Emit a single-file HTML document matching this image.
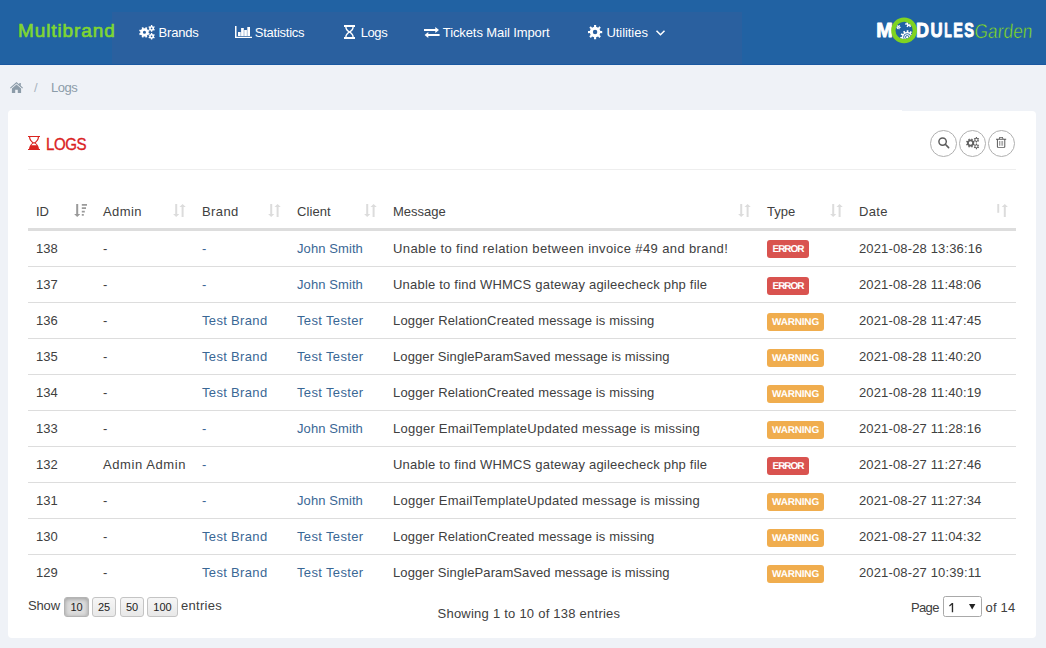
<!DOCTYPE html>
<html>
<head>
<meta charset="utf-8">
<title>Multibrand - Logs</title>
<style>
*{box-sizing:border-box}
html,body{margin:0;padding:0}
body{width:1046px;height:648px;overflow:hidden;background:#eff2f7;font-family:"Liberation Sans",sans-serif;font-size:13px;color:#404040;position:relative}
.abs{position:absolute;white-space:nowrap}
.ic{position:absolute;display:block;overflow:visible}
#nav{position:absolute;left:0;top:0;width:1046px;height:65px;background:#2162a3;border-bottom:1px solid #1a58a0}
#navin{position:absolute;left:112px;top:12px;width:630px;height:52px;background:#2a609f}
#brand{left:18px;top:20px;font-size:19px;font-weight:normal;color:#80d631;line-height:22px;letter-spacing:0.900px;-webkit-text-stroke:0.650px #80d631}
.ni{color:#fff;font-size:13px;line-height:16px;top:25px}
.bc{color:#8c9ca9;font-size:13px;line-height:16px;top:80px}
#panel{position:absolute;left:8px;top:110px;width:1028px;height:528px;background:#fff;border-radius:4px}
#panel2{position:absolute;left:902px;top:110px;width:134px;height:8px;background:#eff2f7}
#panel3{position:absolute;left:896px;top:111px;width:140px;height:12px;background:#fff;border-radius:0 4px 0 0}
#title{left:46.300px;top:134px;font-size:16.5px;line-height:20px;color:#da231f;letter-spacing:-0.500px;-webkit-text-stroke:0.350px #da231f;transform:scaleX(0.915);transform-origin:0 0}
#hr{position:absolute;left:28px;top:169px;width:988px;height:1px;background:#eee}
.cb{position:absolute;top:130px;width:27px;height:27px;border:1px solid #b0b0b0;border-radius:50%;background:#fff}
.th{top:204px;line-height:16px;color:#404040}
#thb{position:absolute;left:28px;top:228px;width:988px;height:3px;background:#ddd}
.row{position:absolute;left:28px;width:988px;height:36px;border-bottom:1px solid #ddd}
.row.last{border-bottom:none}
.c{position:absolute;top:10px;line-height:16px;white-space:nowrap;color:#404040}
.c.a{color:#3a6795}
.lbl{position:absolute;left:739px;top:10px;color:#fff;font-size:10px;font-weight:bold;line-height:19.5px;height:18px;border-radius:3px;text-align:center;white-space:nowrap}
.lbl i{display:block;font-style:normal;text-rendering:geometricPrecision}
.err{background:#d9534f;width:42px;letter-spacing:-1.050px}
.warn{background:#f0ad4e;width:57px;letter-spacing:-0.200px}
.btn{position:absolute;top:597px;height:20px;border:1px solid #c4c4c4;border-radius:3px;background:linear-gradient(#f6f6f6,#e8e8e8);font-size:11px;line-height:19px;text-align:center;color:#222}
.btn.on{border-color:#b4b4b4;background:#dcdcdc;box-shadow:inset 0 1px 4px rgba(0,0,0,0.300)}
.ft{top:598px;line-height:16px}
#sel{position:absolute;left:943px;top:596px;width:39px;height:21px;border:1px solid #a9a9a9;border-radius:2.500px;background:#fff}
</style>
</head>
<body>
<div id="nav"><div id="navin"></div></div>
<div id="brand" class="abs">Multibrand</div>
<svg class="ic" style="left:139px;top:24.6px" width="16.00" height="14.60" viewBox="0 0 16 14.6"><path fill="#fff" fill-rule="evenodd" d="M9.62 8.10 L10.81 8.55 L10.12 10.20 L8.97 9.69 L7.84 10.82 L8.35 11.97 L6.70 12.66 L6.25 11.47 L4.65 11.47 L4.20 12.66 L2.55 11.97 L3.06 10.82 L1.93 9.69 L0.78 10.20 L0.09 8.55 L1.28 8.10 L1.28 6.50 L0.09 6.05 L0.78 4.40 L1.93 4.91 L3.06 3.78 L2.55 2.63 L4.20 1.94 L4.65 3.13 L6.25 3.13 L6.70 1.94 L8.35 2.63 L7.84 3.78 L8.97 4.91 L10.12 4.40 L10.81 6.05 L9.62 6.50Z M3.90 7.30 a1.55 1.55 0 1 0 3.10 0 a1.55 1.55 0 1 0 -3.10 0Z M15.01 4.05 L15.83 4.45 L15.13 5.68 L14.37 5.17 L13.25 5.81 L13.31 6.73 L11.89 6.73 L11.95 5.81 L10.83 5.17 L10.07 5.68 L9.37 4.45 L10.19 4.05 L10.19 2.75 L9.37 2.35 L10.07 1.12 L10.83 1.63 L11.95 0.99 L11.89 0.07 L13.31 0.07 L13.25 0.99 L14.37 1.63 L15.13 1.12 L15.83 2.35 L15.01 2.75Z M11.75 3.40 a0.85 0.85 0 1 0 1.70 0 a0.85 0.85 0 1 0 -1.70 0Z M15.01 11.95 L15.83 12.35 L15.13 13.58 L14.37 13.07 L13.25 13.71 L13.31 14.63 L11.89 14.63 L11.95 13.71 L10.83 13.07 L10.07 13.58 L9.37 12.35 L10.19 11.95 L10.19 10.65 L9.37 10.25 L10.07 9.02 L10.83 9.53 L11.95 8.89 L11.89 7.97 L13.31 7.97 L13.25 8.89 L14.37 9.53 L15.13 9.02 L15.83 10.25 L15.01 10.65Z M11.75 11.30 a0.85 0.85 0 1 0 1.70 0 a0.85 0.85 0 1 0 -1.70 0Z"/></svg>
<div class="abs ni" style="left:158.600px;letter-spacing:-0.2px">Brands</div>
<svg class="ic" style="left:235px;top:26px" width="17" height="12" viewBox="0 0 17 12"><path fill="#fff" d="M0 0h1.5v10.700h15.500v1.300h-17zM3 6h2.700v4h-2.700zM6.100 2h2.700v8h-2.700zM9.200 4h2.700v6h-2.700zM12.300 1h2.700v9h-2.700z"/></svg>
<div class="abs ni" style="left:254.800px;letter-spacing:-0.25px">Statistics</div>
<svg class="ic" style="left:344px;top:25px" width="11" height="14" viewBox="0 0 11 14"><path fill="#fff" fill-rule="evenodd" d="M0 0h11v1.900h-11zM0 12.100h11v1.900h-11zM1.200 1.900C1.200 4.500 3 6 4.300 7C3 8 1.200 9.500 1.200 12.100L9.800 12.100C9.800 9.500 8 8 6.700 7C8 6 9.800 4.500 9.800 1.900ZM2.600 1.900C2.600 4 4.300 5.300 5.500 6.200C6.700 5.300 8.400 4 8.400 1.900ZM2.600 12.100C2.600 10 4.300 8.700 5.500 7.800C6.700 8.700 8.400 10 8.400 12.100Z"/></svg>
<div class="abs ni" style="left:360.800px;letter-spacing:-0.45px">Logs</div>
<svg class="ic" style="left:424.300px;top:27px" width="15.600" height="11" viewBox="0 0 15.600 11"><path fill="#fff" d="M0 2.050h11.300v-2.050l3.700 2.950l-3.700 2.950v-1.900h-11.300zM15.600 7.050v1.950h-11.300v2l-3.700-2.950l3.700-2.950v1.950z"/></svg>
<div class="abs ni" style="left:442.800px;letter-spacing:-0.1px">Tickets Mail Import</div>
<svg class="ic" style="left:587.75px;top:24.95px" width="14.2" height="14.2" viewBox="0 0 14 14"><path fill="#fff" fill-rule="evenodd" d="M12.21 6.01 L14.02 5.93 L14.02 8.07 L12.21 7.99 L11.38 9.98 L12.72 11.21 L11.21 12.72 L9.98 11.38 L7.99 12.21 L8.07 14.02 L5.93 14.02 L6.01 12.21 L4.02 11.38 L2.79 12.72 L1.28 11.21 L2.62 9.98 L1.79 7.99 L-0.02 8.07 L-0.02 5.93 L1.79 6.01 L2.62 4.02 L1.28 2.79 L2.79 1.28 L4.02 2.62 L6.01 1.79 L5.93 -0.02 L8.07 -0.02 L7.99 1.79 L9.98 2.62 L11.21 1.28 L12.72 2.79 L11.38 4.02Z M4.80 7.00 a2.20 2.20 0 1 0 4.40 0 a2.20 2.20 0 1 0 -4.40 0Z"/></svg>
<div class="abs ni" style="left:606.400px;letter-spacing:-0.05px">Utilities</div>
<svg class="ic" style="left:656px;top:29.500px" width="9" height="6" viewBox="0 0 9 6"><path fill="none" stroke="#fff" stroke-width="1.500" d="M0.500 0.700l4 4.100l4-4.100"/></svg>
<svg class="ic" style="left:0;top:0" width="1046" height="65" viewBox="0 0 1046 65"><defs><clipPath id="lc"><circle cx="904.1" cy="30.4" r="9"/></clipPath></defs><g font-family="Liberation Sans, sans-serif" font-size="20.3" font-weight="bold" fill="#fff" stroke="#fff" stroke-width="0.9" stroke-linejoin="round"><text transform="translate(876.16,37.4) scale(0.978,1)">M</text><text transform="translate(915.98,37.4) scale(0.889,1)">D</text><text transform="translate(930.54,37.4) scale(0.829,1)">U</text><text transform="translate(944.14,37.4) scale(0.612,1)">L</text><text transform="translate(953.31,37.4) scale(0.715,1)">E</text><text transform="translate(964.21,37.4) scale(0.722,1)">S</text></g><g clip-path="url(#lc)"><path fill="#fff" fill-rule="evenodd" d="M912.40 37.42 L914.18 37.72 L913.83 39.44 L912.07 39.02 L911.45 40.20 L912.79 41.41 L911.57 42.67 L910.32 41.36 L909.16 42.02 L909.63 43.77 L907.92 44.16 L907.57 42.39 L906.24 42.31 L905.69 44.04 L904.04 43.45 L904.71 41.76 L903.63 40.98 L902.24 42.14 L901.16 40.75 L902.64 39.69 L902.15 38.45 L900.36 38.67 L900.21 36.92 L902.01 36.83 L902.28 35.52 L900.65 34.73 L901.47 33.18 L903.04 34.08 L903.97 33.13 L903.02 31.58 L904.55 30.72 L905.38 32.33 L906.68 32.03 L906.72 30.22 L908.47 30.32 L908.31 32.12 L909.56 32.57 L910.57 31.07 L911.99 32.10 L910.88 33.52 L911.69 34.58 L913.35 33.86 L913.99 35.50 L912.28 36.10Z"/><circle cx="907.2" cy="37.2" r="3.6" fill="none" stroke="#2162a3" stroke-width="0.9"/><circle cx="907.2" cy="37.2" r="1.7" fill="none" stroke="#2162a3" stroke-width="0.9"/><path fill="#fff" fill-rule="evenodd" d="M911.40 23.67 L912.79 23.92 L912.31 25.47 L911.02 24.89 L910.44 25.52 L911.11 26.76 L909.60 27.35 L909.25 25.99 L908.39 25.92 L907.84 27.22 L906.44 26.41 L907.29 25.28 L906.81 24.57 L905.45 24.95 L905.21 23.35 L906.62 23.31 L906.87 22.49 L905.73 21.67 L906.83 20.48 L907.74 21.56 L908.54 21.24 L908.47 19.84 L910.09 19.96 L909.81 21.34 L910.55 21.77 L911.61 20.84 L912.53 22.18 L911.27 22.83Z M908.10 23.60 a0.90 0.90 0 1 0 1.80 0 a0.90 0.90 0 1 0 -1.80 0Z"/><path fill="#fff" fill-rule="evenodd" d="M899.77 26.90 L900.67 26.85 L900.56 27.99 L899.68 27.76 L899.34 28.24 L899.84 29.00 L898.79 29.47 L898.55 28.59 L897.97 28.53 L897.56 29.34 L896.63 28.67 L897.27 28.03 L897.03 27.50 L896.13 27.55 L896.24 26.41 L897.12 26.64 L897.46 26.16 L896.96 25.40 L898.01 24.93 L898.25 25.81 L898.83 25.87 L899.24 25.06 L900.17 25.73 L899.53 26.37Z M898.00 27.20 a0.40 0.40 0 1 0 0.80 0 a0.40 0.40 0 1 0 -0.80 0Z"/></g><circle cx="904.1" cy="30.4" r="10.75" fill="none" stroke="#7fd321" stroke-width="4.3"/><g transform="translate(974,37.500) skewX(-5)"><text x="0" y="0" font-family="Liberation Sans, sans-serif" font-size="20" fill="#84dc22" stroke="#2162a3" stroke-width="0.450" textLength="58" lengthAdjust="spacingAndGlyphs">Garden</text></g></svg>
<svg class="ic" style="left:9.900px;top:81.500px" width="13" height="11" viewBox="0 0 13 11"><path fill="#8c9ca9" d="M6.500 0l2.800 2.500v-1.500h1.500v2.800l2.200 2l-0.700 0.800l-5.800-5.100l-5.800 5.100l-0.700-0.800zM6.500 2.600l4.600 4v4.400h-3.300v-3.200h-2.600v3.200h-3.300v-4.400z"/></svg>
<div class="abs bc" style="left:34px;color:#a9b5c0">/</div>
<div class="abs bc" style="left:51px;letter-spacing:-0.45px">Logs</div>
<div id="panel"></div><div id="panel2"></div><div id="panel3"></div>
<svg class="ic" style="left:28px;top:136px" width="12" height="14" viewBox="0 0 12 14"><path fill="#da231f" fill-rule="evenodd" d="M0 0h12v1.100h-12zM0 12.900h12v1.100h-12zM1 1C1 3.800 2.800 5.600 4.400 6.900C2.800 8.200 1 10.200 1 13L11 13C11 10.200 9.200 8.200 7.600 6.900C9.200 5.600 11 3.800 11 1ZM2.200 1C2.200 3.500 3.800 5 5.300 6.200L6.700 6.200C8.200 5 9.800 3.500 9.800 1ZM5.300 7.600C4.500 8.200 3.800 8.700 3.300 9.300L8.700 9.300C8.200 8.700 7.500 8.200 6.700 7.600Z"/></svg>
<div id="title" class="abs">LOGS</div>
<div id="hr"></div>
<div class="cb" style="left:930px"></div><div class="cb" style="left:959px"></div><div class="cb" style="left:988px"></div>
<svg class="ic" style="left:938.100px;top:137.300px" width="11.500" height="11.500" viewBox="0 0 11.500 11.500"><circle cx="4.600" cy="4.600" r="3.700" fill="none" stroke="#5c5c5c" stroke-width="1.450"/><path d="M7.300 7.300l3.300 3.300" stroke="#5c5c5c" stroke-width="1.600" stroke-linecap="round"/></svg>
<svg class="ic" style="left:965.8px;top:136.9px" width="13.28" height="12.12" viewBox="0 0 16 14.6"><path fill="#606060" fill-rule="evenodd" d="M9.62 8.10 L10.81 8.55 L10.12 10.20 L8.97 9.69 L7.84 10.82 L8.35 11.97 L6.70 12.66 L6.25 11.47 L4.65 11.47 L4.20 12.66 L2.55 11.97 L3.06 10.82 L1.93 9.69 L0.78 10.20 L0.09 8.55 L1.28 8.10 L1.28 6.50 L0.09 6.05 L0.78 4.40 L1.93 4.91 L3.06 3.78 L2.55 2.63 L4.20 1.94 L4.65 3.13 L6.25 3.13 L6.70 1.94 L8.35 2.63 L7.84 3.78 L8.97 4.91 L10.12 4.40 L10.81 6.05 L9.62 6.50Z M3.35 7.30 a2.10 2.10 0 1 0 4.20 0 a2.10 2.10 0 1 0 -4.20 0Z M15.01 4.05 L15.83 4.45 L15.13 5.68 L14.37 5.17 L13.25 5.81 L13.31 6.73 L11.89 6.73 L11.95 5.81 L10.83 5.17 L10.07 5.68 L9.37 4.45 L10.19 4.05 L10.19 2.75 L9.37 2.35 L10.07 1.12 L10.83 1.63 L11.95 0.99 L11.89 0.07 L13.31 0.07 L13.25 0.99 L14.37 1.63 L15.13 1.12 L15.83 2.35 L15.01 2.75Z M11.25 3.40 a1.35 1.35 0 1 0 2.70 0 a1.35 1.35 0 1 0 -2.70 0Z M15.01 11.95 L15.83 12.35 L15.13 13.58 L14.37 13.07 L13.25 13.71 L13.31 14.63 L11.89 14.63 L11.95 13.71 L10.83 13.07 L10.07 13.58 L9.37 12.35 L10.19 11.95 L10.19 10.65 L9.37 10.25 L10.07 9.02 L10.83 9.53 L11.95 8.89 L11.89 7.97 L13.31 7.97 L13.25 8.89 L14.37 9.53 L15.13 9.02 L15.83 10.25 L15.01 10.65Z M11.25 11.30 a1.35 1.35 0 1 0 2.70 0 a1.35 1.35 0 1 0 -2.70 0Z"/></svg>
<svg class="ic" style="left:996.300px;top:137.200px" width="10.200" height="10.800" viewBox="0 0 10.200 10.800"><path fill="#5a5a5a" fill-rule="evenodd" d="M3.400 0h3.400l0.600 1.700h2.800v1h-0.900v7c0 0.600-0.500 1.100-1.100 1.100h-6.200c-0.600 0-1.100-0.500-1.100-1.100v-7h-0.900v-1h2.800zM4 0.800l-0.300 0.900h2.800l-0.300-0.900zM1.900 2.700v6.800c0 0.300 0.200 0.500 0.500 0.500h5.400c0.300 0 0.500-0.200 0.500-0.500v-6.800z"/><path fill="#8a8a8a" d="M3.100 3.900h0.800v4.900h-0.800zM4.700 3.900h0.800v4.900h-0.800zM6.300 3.900h0.800v4.900h-0.800z"/></svg>
<div class="abs th" style="left:36px;letter-spacing:0px">ID</div>
<div class="abs th" style="left:103px;letter-spacing:0.4px">Admin</div>
<div class="abs th" style="left:202px;letter-spacing:0.4px">Brand</div>
<div class="abs th" style="left:297px;letter-spacing:0.1px">Client</div>
<div class="abs th" style="left:393px;letter-spacing:0px">Message</div>
<div class="abs th" style="left:767px;letter-spacing:0px">Type</div>
<div class="abs th" style="left:859px;letter-spacing:0.3px">Date</div>
<div id="thb"></div>
<div class="row" style="top:231px"><span class="c" style="left:8px">138</span><span class="c" style="left:75px">-</span><span class="c a" style="left:174px">-</span><span class="c a" style="left:269px"><span style="letter-spacing:0.09px">John Smith</span></span><span class="c" style="left:365px"><span style="letter-spacing:0.385px">Unable to find relation between invoice #49 and brand!</span></span><span class="lbl err" style="top:9px"><i>ERROR</i></span><span class="c" style="left:831px;letter-spacing:0.140px">2021-08-28 13:36:16</span></div>
<div class="row" style="top:267px"><span class="c" style="left:8px">137</span><span class="c" style="left:75px">-</span><span class="c a" style="left:174px">-</span><span class="c a" style="left:269px"><span style="letter-spacing:0.09px">John Smith</span></span><span class="c" style="left:365px"><span style="letter-spacing:0.205px">Unable to find WHMCS gateway agileecheck php file</span></span><span class="lbl err"><i>ERROR</i></span><span class="c" style="left:831px;letter-spacing:0.140px">2021-08-28 11:48:06</span></div>
<div class="row" style="top:303px"><span class="c" style="left:8px">136</span><span class="c" style="left:75px">-</span><span class="c a" style="left:174px"><span style="letter-spacing:0.33px">Test Brand</span></span><span class="c a" style="left:269px"><span style="letter-spacing:0.35px">Test Tester</span></span><span class="c" style="left:365px"><span style="letter-spacing:0.155px">Logger RelationCreated message is missing</span></span><span class="lbl warn"><i>WARNING</i></span><span class="c" style="left:831px;letter-spacing:0.140px">2021-08-28 11:47:45</span></div>
<div class="row" style="top:339px"><span class="c" style="left:8px">135</span><span class="c" style="left:75px">-</span><span class="c a" style="left:174px"><span style="letter-spacing:0.33px">Test Brand</span></span><span class="c a" style="left:269px"><span style="letter-spacing:0.35px">Test Tester</span></span><span class="c" style="left:365px"><span style="letter-spacing:0.1px">Logger SingleParamSaved message is missing</span></span><span class="lbl warn"><i>WARNING</i></span><span class="c" style="left:831px;letter-spacing:0.140px">2021-08-28 11:40:20</span></div>
<div class="row" style="top:375px"><span class="c" style="left:8px">134</span><span class="c" style="left:75px">-</span><span class="c a" style="left:174px"><span style="letter-spacing:0.33px">Test Brand</span></span><span class="c a" style="left:269px"><span style="letter-spacing:0.35px">Test Tester</span></span><span class="c" style="left:365px"><span style="letter-spacing:0.155px">Logger RelationCreated message is missing</span></span><span class="lbl warn"><i>WARNING</i></span><span class="c" style="left:831px;letter-spacing:0.140px">2021-08-28 11:40:19</span></div>
<div class="row" style="top:411px"><span class="c" style="left:8px">133</span><span class="c" style="left:75px">-</span><span class="c a" style="left:174px">-</span><span class="c a" style="left:269px"><span style="letter-spacing:0.09px">John Smith</span></span><span class="c" style="left:365px"><span style="letter-spacing:0.25px">Logger EmailTemplateUpdated message is missing</span></span><span class="lbl warn"><i>WARNING</i></span><span class="c" style="left:831px;letter-spacing:0.140px">2021-08-27 11:28:16</span></div>
<div class="row" style="top:447px"><span class="c" style="left:8px">132</span><span class="c" style="left:75px"><span style="letter-spacing:0.58px">Admin Admin</span></span><span class="c a" style="left:174px">-</span><span class="c" style="left:365px"><span style="letter-spacing:0.205px">Unable to find WHMCS gateway agileecheck php file</span></span><span class="lbl err"><i>ERROR</i></span><span class="c" style="left:831px;letter-spacing:0.140px">2021-08-27 11:27:46</span></div>
<div class="row" style="top:483px"><span class="c" style="left:8px">131</span><span class="c" style="left:75px">-</span><span class="c a" style="left:174px">-</span><span class="c a" style="left:269px"><span style="letter-spacing:0.09px">John Smith</span></span><span class="c" style="left:365px"><span style="letter-spacing:0.25px">Logger EmailTemplateUpdated message is missing</span></span><span class="lbl warn"><i>WARNING</i></span><span class="c" style="left:831px;letter-spacing:0.140px">2021-08-27 11:27:34</span></div>
<div class="row" style="top:519px"><span class="c" style="left:8px">130</span><span class="c" style="left:75px">-</span><span class="c a" style="left:174px"><span style="letter-spacing:0.33px">Test Brand</span></span><span class="c a" style="left:269px"><span style="letter-spacing:0.35px">Test Tester</span></span><span class="c" style="left:365px"><span style="letter-spacing:0.155px">Logger RelationCreated message is missing</span></span><span class="lbl warn"><i>WARNING</i></span><span class="c" style="left:831px;letter-spacing:0.140px">2021-08-27 11:04:32</span></div>
<div class="row last" style="top:555px"><span class="c" style="left:8px">129</span><span class="c" style="left:75px">-</span><span class="c a" style="left:174px"><span style="letter-spacing:0.33px">Test Brand</span></span><span class="c a" style="left:269px"><span style="letter-spacing:0.35px">Test Tester</span></span><span class="c" style="left:365px"><span style="letter-spacing:0.1px">Logger SingleParamSaved message is missing</span></span><span class="lbl warn"><i>WARNING</i></span><span class="c" style="left:831px;letter-spacing:0.140px">2021-08-27 10:39:11</span></div>
<svg class="ic" style="left:74px;top:204px" width="14" height="13" viewBox="0 0 14 13"><path fill="#9a9a9a" d="M2.2 0h2v10h2.1l-3.1 3l-3.1 -3h2.1z"/><path fill="#9a9a9a" d="M7.8 0h5.2v1.7h-5.2zM7.8 3.3h4.2v1.7h-4.2zM7.8 6.7h3v1.7h-3zM7.8 10.1h2v1.7h-2z"/></svg>
<svg class="ic" style="left:173px;top:204px" width="13" height="13" viewBox="0 0 13 13"><path fill="#dcdcdc" d="M2.2 0h2v10h2.1l-3.1 3l-3.1 -3h2.1z"/><path fill="#dcdcdc" d="M8.6 13h2v-10h2.1l-3.1 -3l-3.1 3h2.1z"/></svg>
<svg class="ic" style="left:268px;top:204px" width="13" height="13" viewBox="0 0 13 13"><path fill="#dcdcdc" d="M2.2 0h2v10h2.1l-3.1 3l-3.1 -3h2.1z"/><path fill="#dcdcdc" d="M8.6 13h2v-10h2.1l-3.1 -3l-3.1 3h2.1z"/></svg>
<svg class="ic" style="left:364px;top:204px" width="13" height="13" viewBox="0 0 13 13"><path fill="#dcdcdc" d="M2.2 0h2v10h2.1l-3.1 3l-3.1 -3h2.1z"/><path fill="#dcdcdc" d="M8.6 13h2v-10h2.1l-3.1 -3l-3.1 3h2.1z"/></svg>
<svg class="ic" style="left:738px;top:204px" width="13" height="13" viewBox="0 0 13 13"><path fill="#dcdcdc" d="M2.2 0h2v10h2.1l-3.1 3l-3.1 -3h2.1z"/><path fill="#dcdcdc" d="M8.6 13h2v-10h2.1l-3.1 -3l-3.1 3h2.1z"/></svg>
<svg class="ic" style="left:830px;top:204px" width="13" height="13" viewBox="0 0 13 13"><path fill="#dcdcdc" d="M2.2 0h2v10h2.1l-3.1 3l-3.1 -3h2.1z"/><path fill="#dcdcdc" d="M8.6 13h2v-10h2.1l-3.1 -3l-3.1 3h2.1z"/></svg>
<svg class="ic" style="left:997px;top:204px" width="13" height="13" viewBox="0 0 13 13"><path fill="#dcdcdc" d="M0.3 0h1.9v8.8h-1.9z"/><path fill="#dcdcdc" d="M6.8 13h2v-10h2.1l-3.1 -3l-3.1 3h2.1z"/></svg>
<div class="abs ft" style="left:28px;letter-spacing:-0.150px">Show</div>
<div class="btn on" style="left:64px;width:25px">10</div><div class="btn" style="left:92px;width:24px">25</div><div class="btn" style="left:120px;width:24px">50</div><div class="btn" style="left:147px;width:31px">100</div>
<div class="abs ft" style="left:181px;letter-spacing:0.3px">entries</div>
<div class="abs ft" style="left:437.500px;top:606px;letter-spacing:0.24px">Showing 1 to 10 of 138 entries</div>
<div class="abs ft" style="left:911px;top:600px;letter-spacing:-0.650px">Page</div>
<div id="sel"></div><svg class="ic" style="left:949px;top:602.700px" width="5" height="9.300" viewBox="0 0 5 9.300"><path fill="#2a2a2a" d="M2.900 0h1.250v9.300h-1.350v-7.600l-2 1.700l-0.750-0.900z"/></svg>
<svg class="ic" style="left:969px;top:604.400px" width="6.400" height="5.600" viewBox="0 0 7 6"><path fill="#222" d="M0 0h7l-3.500 6z"/></svg>
<div class="abs ft" style="left:985.500px;top:600px;letter-spacing:0.2px">of 14</div>
</body>
</html>
